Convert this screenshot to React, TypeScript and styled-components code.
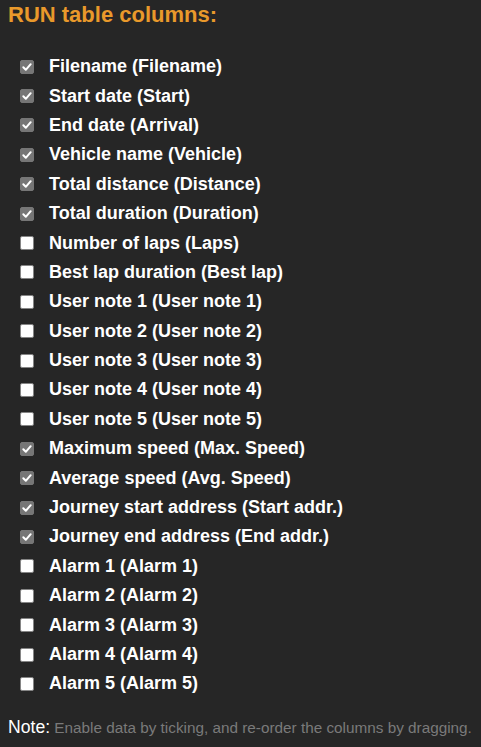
import React, { useState } from "react";
import styled, { createGlobalStyle } from "styled-components";

const Global = createGlobalStyle`
  html, body { margin: 0; padding: 0; background: #262626; }
  body { font-family: "Liberation Sans", Arial, sans-serif; }
`;

const Page = styled.div`
  width: 481px;
  min-height: 747px;
  background: #262626;
  padding: 1px 8px 0 8px;
  box-sizing: border-box;
`;

const Title = styled.h2`
  margin: 0;
  color: #e9992b;
  font-size: 22px;
  font-weight: bold;
  line-height: 28px;
`;

const List = styled.ul`
  list-style: none;
  margin: 23px 0 0 0;
  padding: 0 0 0 12px;
  display: flex;
  flex-direction: column;
`;

const Row = styled.li`
  display: flex;
  align-items: center;
  height: 29.4px;
  cursor: grab;
`;

const Box = styled.span<{ $checked: boolean }>`
  width: 14px;
  height: 14px;
  box-sizing: border-box;
  border-radius: 2px;
  flex: none;
  display: flex;
  align-items: center;
  justify-content: center;
  background: ${(p) => (p.$checked ? "#767676" : "#ffffff")};
  border: 1px solid ${(p) => (p.$checked ? "#767676" : "#858585")};
  margin-right: 15px;
`;

const Label = styled.span`
  color: #ffffff;
  font-size: 18px;
  font-weight: bold;
`;

const Note = styled.p`
  margin: 18px 0 0 0;
  font-size: 15.3px;
  color: #7a7a7a;
  white-space: nowrap;
`;

const NoteLead = styled.span`
  color: #ffffff;
  font-size: 17.6px;
`;

const items: [string, boolean][] = [
  ["Filename (Filename)", true],
  ["Start date (Start)", true],
  ["End date (Arrival)", true],
  ["Vehicle name (Vehicle)", true],
  ["Total distance (Distance)", true],
  ["Total duration (Duration)", true],
  ["Number of laps (Laps)", false],
  ["Best lap duration (Best lap)", false],
  ["User note 1 (User note 1)", false],
  ["User note 2 (User note 2)", false],
  ["User note 3 (User note 3)", false],
  ["User note 4 (User note 4)", false],
  ["User note 5 (User note 5)", false],
  ["Maximum speed (Max. Speed)", true],
  ["Average speed (Avg. Speed)", true],
  ["Journey start address (Start addr.)", true],
  ["Journey end address (End addr.)", true],
  ["Alarm 1 (Alarm 1)", false],
  ["Alarm 2 (Alarm 2)", false],
  ["Alarm 3 (Alarm 3)", false],
  ["Alarm 4 (Alarm 4)", false],
  ["Alarm 5 (Alarm 5)", false],
];

export default function App() {
  const [state, setState] = useState(items.map((i) => i[1]));
  return (
    <Page>
      <Global />
      <Title>RUN table columns:</Title>
      <List>
        {items.map(([label], i) => (
          <Row
            key={label}
            onClick={() => setState((s) => s.map((v, j) => (j === i ? !v : v)))}
          >
            <Box $checked={state[i]}>
              {state[i] && (
                <svg width="12" height="12" viewBox="0 0 12 12">
                  <path d="M2.3 6.3 L4.8 8.8 L9.7 3.2" fill="none" stroke="#fff" strokeWidth="2" strokeLinecap="round" strokeLinejoin="round" />
                </svg>
              )}
            </Box>
            <Label>{label}</Label>
          </Row>
        ))}
      </List>
      <Note>
        <NoteLead>Note:</NoteLead> Enable data by ticking, and re-order the columns by dragging.
      </Note>
    </Page>
  );
}
